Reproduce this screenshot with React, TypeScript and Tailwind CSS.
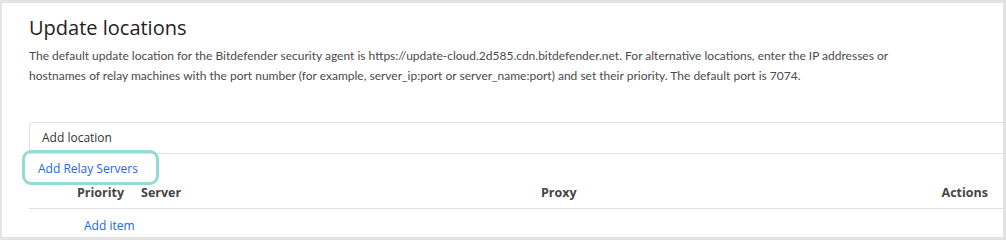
export default function App() {
  return (
    <div className="w-[1006px] h-[240px] bg-[#e3e3e3] pt-[3px] pl-[2px] pr-[3px] pb-[3px]" style={{ fontFamily: '"Open Sans", "Noto Sans", sans-serif' }}>
      <div className="relative h-full bg-white pl-[27px] overflow-hidden">
        <h1 className="pt-[11px] text-[20px] leading-[28px] text-[#222] font-normal">Update locations</h1>
        <p className="mt-[4px] text-[12px] leading-[20px] text-[#4a4a4a]" style={{ fontFamily: 'Lato, "Noto Sans", sans-serif' }}>
          The default update location for the Bitdefender security agent is https://update-cloud.2d585.cdn.bitdefender.net. For alternative locations, enter the IP addresses or
          <br />
          hostnames of relay machines with the port number (for example, server_ip:port or server_name:port) and set their priority. The default port is 7074.
        </p>

        <div className="mt-[36px] h-[32px] border border-r-0 border-[#e0e0e0] rounded-tl-[4px] flex items-center pl-[12px] text-[12px] text-[#333]">
          Add location
        </div>

        <div className="h-[30px] flex items-center pl-[9px] text-[12px] text-[#1769ee]">Add Relay Servers</div>

        <div className="h-[25px] flex items-start text-[12.5px] font-bold text-[#444] border-b border-[#e0e0e0]">
          <div className="w-[48px]" />
          <div className="w-[64px]">Priority</div>
          <div className="w-[400px]">Server</div>
          <div className="flex-1">Proxy</div>
          <div className="pr-[15px]">Actions</div>
        </div>

        <div className="h-[34px] flex items-center pl-[55px] text-[12px] text-[#1769ee]">Add item</div>

        <div className="absolute left-[20px] top-[147px] w-[137px] h-[35px] border-[3px] border-[#94dbd5] rounded-[9px]" />
      </div>
    </div>
  );
}
